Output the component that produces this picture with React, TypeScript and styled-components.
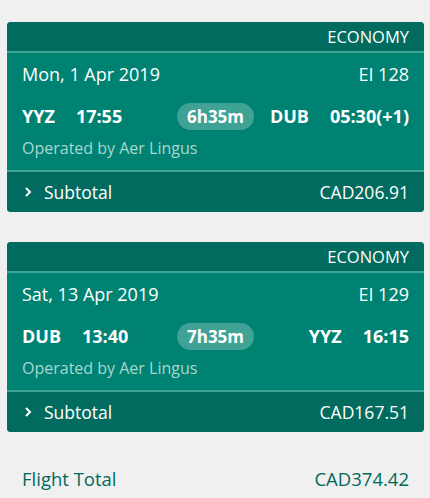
import React from "react";
import styled, { createGlobalStyle } from "styled-components";

const Global = createGlobalStyle`
  html, body { margin: 0; padding: 0; background: #f0f0f0; }
  body { font-family: "Open Sans", "Noto Sans", sans-serif; color: #fff; }
  * { box-sizing: border-box; }
`;

const Page = styled.div`
  width: 430px;
  padding: 22px 6px 0 7px;
  display: flex;
  flex-direction: column;
  gap: 30px;
`;

const Card = styled.div`
  background: #008272;
  border-radius: 4px;
  overflow: hidden;
  display: flex;
  flex-direction: column;
`;

const Header = styled.div`
  background: #006b5e;
  height: 31px;
  display: flex;
  align-items: center;
  justify-content: flex-end;
  padding: 0 15px;
  font-size: 16.5px;
  border-bottom: 2px solid #3fa396;
`;

const Body = styled.div`
  padding: 8px 15px 0 15px;
  display: flex;
  flex-direction: column;
  height: 117px;
`;

const DateRow = styled.div`
  display: flex;
  justify-content: space-between;
  font-size: 18px;
  height: 26px;
  align-items: center;
`;

const Route = styled.div`
  display: grid;
  grid-template-columns: 1fr auto 1fr;
  align-items: center;
  margin-top: 15px;
  height: 28px;
  font-weight: 700;
  font-size: 18px;
`;

const Side = styled.div<{ $end?: boolean }>`
  display: flex;
  gap: 21px;
  justify-content: ${(p) => (p.$end ? "flex-end" : "flex-start")};
`;

const Pill = styled.div`
  background: rgba(255, 255, 255, 0.25);
  border-radius: 14px;
  height: 27px;
  width: 77px;
  display: flex;
  align-items: center;
  justify-content: center;
  font-size: 17px;
`;

const Operated = styled.div`
  margin-top: 8px;
  height: 20px;
  line-height: 20px;
  font-size: 16px;
  color: #a9d7d0;
`;

const Footer = styled.div`
  background: #006b5e;
  border-top: 2px solid #3fa396;
  height: 42px;
  display: flex;
  align-items: center;
  padding: 0 15px 0 17px;
  font-size: 17.5px;
`;

const Chevron = styled.svg`
  width: 8px;
  height: 12px;
  margin-right: 12px;
`;

const Spacer = styled.div`
  flex: 1;
`;

const TotalRow = styled.div`
  display: flex;
  justify-content: space-between;
  align-items: center;
  height: 26px;
  margin-top: 3px;
  padding: 0 15px;
  color: #00695c;
  font-size: 18.5px;
`;

type Leg = {
  date: string;
  flight: string;
  from: string;
  dep: string;
  dur: string;
  to: string;
  arr: string;
  subtotal: string;
};

const legs: Leg[] = [
  { date: "Mon, 1 Apr 2019", flight: "EI 128", from: "YYZ", dep: "17:55", dur: "6h35m", to: "DUB", arr: "05:30(+1)", subtotal: "CAD206.91" },
  { date: "Sat, 13 Apr 2019", flight: "EI 129", from: "DUB", dep: "13:40", dur: "7h35m", to: "YYZ", arr: "16:15", subtotal: "CAD167.51" },
];

export default function App() {
  return (
    <>
      <Global />
      <Page>
        {legs.map((l) => (
          <Card key={l.flight}>
            <Header>ECONOMY</Header>
            <Body>
              <DateRow>
                <span>{l.date}</span>
                <span>{l.flight}</span>
              </DateRow>
              <Route>
                <Side>
                  <span>{l.from}</span>
                  <span>{l.dep}</span>
                </Side>
                <Pill>{l.dur}</Pill>
                <Side $end>
                  <span>{l.to}</span>
                  <span>{l.arr}</span>
                </Side>
              </Route>
              <Operated>Operated by Aer Lingus</Operated>
            </Body>
            <Footer>
              <Chevron viewBox="0 0 8 12">
                <path d="M2 2 L6 6 L2 10" fill="none" stroke="#fff" strokeWidth="2" />
              </Chevron>
              <span>Subtotal</span>
              <Spacer />
              <span>{l.subtotal}</span>
            </Footer>
          </Card>
        ))}
        <TotalRow>
          <span>Flight Total</span>
          <span>CAD374.42</span>
        </TotalRow>
      </Page>
    </>
  );
}
